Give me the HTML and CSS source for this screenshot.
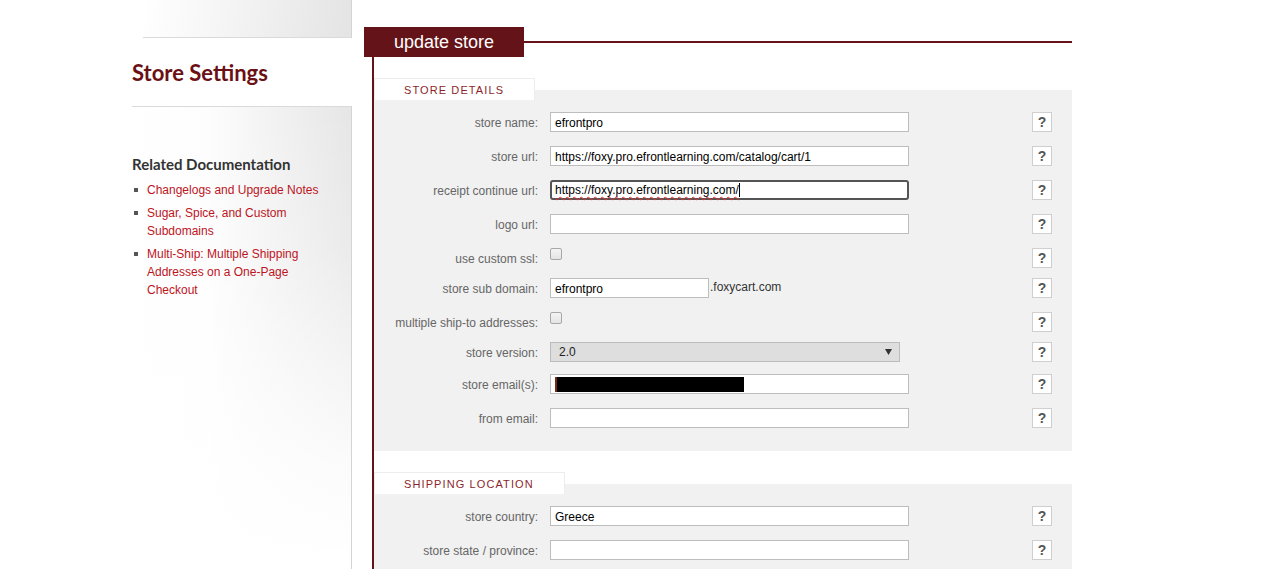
FILE: index.html
```html
<!DOCTYPE html>
<html>
<head>
<meta charset="utf-8">
<title>Store Settings</title>
<link rel="stylesheet" href="styles.css">
</head>
<body>
<div class="page">
  <aside class="sidebar">
    <div class="side-top"></div>
    <h1 class="side-title">Store Settings</h1>
    <div class="side-docs">
      <h3>Related Documentation</h3>
      <ul class="doc-list">
        <li><a href="#">Changelogs and Upgrade Notes</a></li>
        <li><a href="#">Sugar, Spice, and Custom Subdomains</a></li>
        <li><a href="#">Multi-Ship: Multiple Shipping Addresses on a One-Page Checkout</a></li>
      </ul>
    </div>
  </aside>

  <main class="main">
    <div class="main-head">
      <div class="main-tab">update store</div>
      <div class="main-rule"></div>
    </div>
    <div class="main-body">
      <section class="group">
        <div class="group-tab">Store Details</div>
        <div class="rows">
          <div class="row">
            <label class="lbl">store name:</label>
            <div class="field"><input class="txt" value="efrontpro"></div>
            <span class="help">?</span>
          </div>
          <div class="row">
            <label class="lbl">store url:</label>
            <div class="field"><input class="txt" value="https://foxy.pro.efrontlearning.com/catalog/cart/1"></div>
            <span class="help">?</span>
          </div>
          <div class="row">
            <label class="lbl">receipt continue url:</label>
            <div class="field"><div class="txt focus"><span class="spell">https://foxy.pro.efrontlearning.com/</span><span class="caret"></span></div></div>
            <span class="help">?</span>
          </div>
          <div class="row">
            <label class="lbl">logo url:</label>
            <div class="field"><input class="txt" value=""></div>
            <span class="help">?</span>
          </div>
          <div class="row">
            <label class="lbl">use custom ssl:</label>
            <div class="field top"><span class="chk"></span></div>
            <span class="help">?</span>
          </div>
          <div class="row t10">
            <label class="lbl">store sub domain:</label>
            <div class="field"><input class="txt short" value="efrontpro"><span class="suffix">.foxycart.com</span></div>
            <span class="help">?</span>
          </div>
          <div class="row">
            <label class="lbl">multiple ship-to addresses:</label>
            <div class="field top"><span class="chk"></span></div>
            <span class="help">?</span>
          </div>
          <div class="row t10">
            <label class="lbl">store version:</label>
            <div class="field"><div class="select"><span>2.0</span><svg class="arrow" width="7" height="6" viewBox="0 0 7 6"><polygon points="0,0 7,0 3.5,6" fill="#333"/></svg></div></div>
            <span class="help">?</span>
          </div>
          <div class="row t12">
            <label class="lbl">store email(s):</label>
            <div class="field"><div class="txt"><span class="redact"></span></div></div>
            <span class="help">?</span>
          </div>
          <div class="row">
            <label class="lbl">from email:</label>
            <div class="field"><input class="txt" value=""></div>
            <span class="help">?</span>
          </div>
        </div>
      </section>

      <section class="group">
        <div class="group-tab">Shipping Location</div>
        <div class="rows">
          <div class="row">
            <label class="lbl">store country:</label>
            <div class="field"><input class="txt" value="Greece"></div>
            <span class="help">?</span>
          </div>
          <div class="row">
            <label class="lbl">store state / province:</label>
            <div class="field"><input class="txt" value=""></div>
            <span class="help">?</span>
          </div>
        </div>
      </section>
    </div>
  </main>
</div>
</body>
</html>
```

FILE: styles.css
```css
* { box-sizing: border-box; }
html, body { margin: 0; padding: 0; background: #fff; }
body {
  font-family: "Liberation Sans", Arial, sans-serif;
  font-size: 12px;
  color: #333;
  overflow: hidden;
}

.page {
  display: flex;
  gap: 12px;
  margin-left: 132px;
  width: 940px;
}

/* ---------- sidebar ---------- */
.sidebar { width: 220px; flex: none; }

.side-top {
  margin-left: 11px;
  height: 38px;
  border-bottom: 1px solid #dadada;
  border-right: 1px solid #d4d4d4;
  background: linear-gradient(100deg, #ffffff 0%, #f6f6f6 35%, #e8e8e8 85%, #e4e4e4 100%);
}

.side-title {
  margin: 0;
  height: 68px;
  padding-top: 23px;
  font: 700 22px/24px Lato, "Liberation Sans", sans-serif;
  color: #6b1014;
}

.side-docs {
  border-top: 1px solid #dadada;
  border-right: 1px solid #d4d4d4;
  min-height: 480px;
  padding-top: 47px;
  background:
    linear-gradient(to bottom, rgba(255,255,255,0) 0%, rgba(255,255,255,0.2) 30%, rgba(255,255,255,0.85) 75%, #fff 95%),
    linear-gradient(to right, #ffffff 0%, #fdfdfd 35%, #f2f2f2 65%, #e6e6e6 100%);
}

.side-docs h3 {
  margin: 0;
  font: 700 15px/20px Lato, "Liberation Sans", sans-serif;
  color: #333;
}

.doc-list {
  list-style: none;
  margin: 7px 25px 0 0;
  padding: 0 0 0 15px;
}
.doc-list li {
  position: relative;
  line-height: 18px;
  margin-bottom: 5px;
}
.doc-list li::before {
  content: "";
  position: absolute;
  left: -13px;
  top: 7px;
  width: 4px;
  height: 4px;
  background: #555;
}
.doc-list a {
  color: #bd141d;
  text-decoration: none;
}

/* ---------- main ---------- */
.main { width: 708px; flex: none; padding-top: 27px; }

.main-head { display: flex; align-items: center; }
.main-tab {
  width: 160px;
  height: 30px;
  background: #641418;
  color: #fff;
  font-size: 18px;
  line-height: 30px;
  text-align: center;
}
.main-rule { flex: 1; height: 2px; background: #641418; }

.main-body {
  margin-left: 8px;
  border-left: 2px solid #641418;
  padding-top: 21px;
  min-height: 560px;
}

.group {
  background: linear-gradient(to bottom, rgba(255,255,255,0) 12px, #f1f1f1 12px);
}
.group + .group { margin-top: 21px; }

.group-tab {
  width: max-content;
  height: 22px;
  line-height: 22px;
  padding: 0 30px 0 29px;
  background: #fff;
  border: 1px solid #ededed;
  border-bottom: none;
  font-size: 11px;
  letter-spacing: 1.1px;
  text-transform: uppercase;
  color: #8c1f2b;
}

.rows { padding: 12px 0 23px; }

.row {
  display: flex;
  align-items: center;
  height: 20px;
  margin-top: 14px;
}
.row:first-child { margin-top: 0; }
.row.t10 { margin-top: 10px; }
.row.t12 { margin-top: 12px; }

.lbl {
  align-self: stretch;
  width: 164px;
  margin-right: 12px;
  padding-top: 2px;
  text-align: right;
  color: #666;
  line-height: 18px;
  white-space: nowrap;
}

.field {
  width: 482px;
  height: 20px;
  display: flex;
  align-items: center;
}
.field.top { align-items: flex-start; }

.help {
  width: 20px;
  height: 20px;
  border: 1px solid #cfcfcf;
  background: #fff;
  font: 700 14px/18px "Liberation Sans", Arial, sans-serif;
  color: #555;
  text-align: center;
}

.txt {
  width: 359px;
  height: 20px;
  border: 1px solid #bdbdbd;
  border-radius: 0;
  padding: 1px 4px 0;
  margin: 0;
  font: 12px/18px "Liberation Sans", Arial, sans-serif;
  color: #000;
  background: #fff;
  outline: none;
  display: flex;
  align-items: center;
}
.txt.short { width: 159px; }

.txt.focus {
  border: 2px solid #555;
  border-radius: 3px;
  padding: 0 3px;
}
.spell {
  text-decoration: underline wavy #e03030;
  text-decoration-thickness: 1px;
  text-underline-offset: 2px;
}
.caret {
  display: inline-block;
  width: 1px;
  height: 14px;
  background: #000;
}

.suffix { color: #333; margin-left: 1px; margin-top: -2px; }

.chk {
  width: 12px;
  height: 12px;
  border: 1px solid #a8a8a8;
  border-radius: 2px;
  background: linear-gradient(#f4f4f4, #e4e4e4);
}

.select {
  width: 350px;
  height: 20px;
  border: 1px solid #bcbcbc;
  background: #dedede;
  padding: 0 7px 0 8px;
  display: flex;
  align-items: center;
  justify-content: space-between;
  color: #222;
}

.redact {
  display: block;
  width: 189px;
  height: 15px;
  background: #000;
  border-left: 2px solid #7a2a10;
}
```
